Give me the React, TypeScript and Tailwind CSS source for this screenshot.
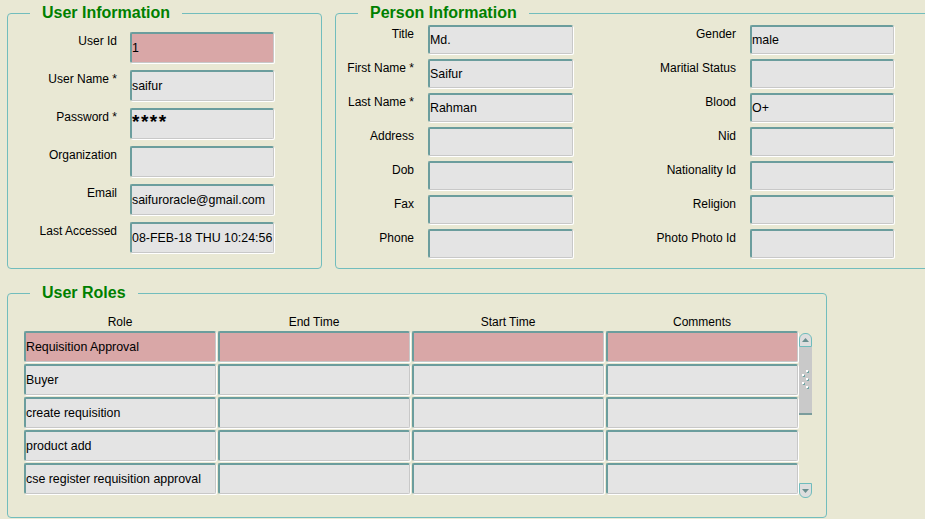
import React from "react";

const FONT = { fontFamily: '"Liberation Sans", Arial, sans-serif' };

const field =
  "flex items-center text-[12.4px] text-black border-t-2 border-l-2 border-t-[#6b9d9d] border-l-[#6b9d9d] border-r border-b border-r-[#c8c8c8] border-b-[#c8c8c8] shadow-[1px_1px_0_#ffffff] rounded-[2px] whitespace-nowrap overflow-hidden";

const Box = ({ value, red, h }: { value?: React.ReactNode; red?: boolean; h: string }) => (
  <div className={`${field} ${h} ${red ? "bg-[#d9a7a7]" : "bg-[#e4e4e4]"}`}>{value}</div>
);

const Label = ({ text }: { text: string }) => (
  <div className="text-right text-[12px] leading-[14px] pt-[2px] text-black whitespace-nowrap">{text}</div>
);

const Legend = ({ title }: { title: string }) => (
  <legend className="ml-[22px] px-[12px] text-[16px] leading-[20px] font-bold text-[#008000]">{title}</legend>
);

const USER_INFO: { label: string; value?: React.ReactNode; red?: boolean }[] = [
  { label: "User Id", value: "1", red: true },
  { label: "User Name *", value: "saifur" },
  {
    label: "Password *",
    value: <span className="text-[19px] font-bold tracking-[1.5px] leading-none -mt-[5px]">****</span>,
  },
  { label: "Organization" },
  { label: "Email", value: "saifuroracle@gmail.com" },
  { label: "Last Accessed", value: "08-FEB-18 THU 10:24:56" },
];

const PERSON: [string, string, string, string][] = [
  ["Title", "Md.", "Gender", "male"],
  ["First Name *", "Saifur", "Maritial Status", ""],
  ["Last Name *", "Rahman", "Blood", "O+"],
  ["Address", "", "Nid", ""],
  ["Dob", "", "Nationality Id", ""],
  ["Fax", "", "Religion", ""],
  ["Phone", "", "Photo Photo Id", ""],
];

const ROLES = [
  "Requisition Approval",
  "Buyer",
  "create requisition",
  "product add",
  "cse register requisition approval",
];

const ScrollBar = () => (
  <div className="ml-[1px] mt-[2px] w-[13px] h-[165px] flex flex-col">
    <div className="h-[14px] rounded-t-[6px] border border-[#6fbcbc] bg-[#dedede] flex items-center justify-center">
      <svg width="7" height="4" viewBox="0 0 7 4">
        <path d="M0 4 L3.5 0 L7 4 Z" fill="#6a8f8f" />
      </svg>
    </div>
    <div className="h-[68px] bg-[#c9c9c9] border-b-2 border-[#7a9c9c] flex items-center justify-center">
      <svg width="9" height="20" viewBox="0 0 9 20">
        {[
          [5, 0],
          [1, 4],
          [5, 8],
          [1, 12],
          [5, 16],
        ].map(([x, y], i) => (
          <g key={i}>
            <rect x={x + 1} y={y + 1} width="2" height="2" fill="#6fa5a5" />
            <rect x={x} y={y} width="2" height="2" fill="#ffffff" />
          </g>
        ))}
      </svg>
    </div>
    <div className="flex-1" />
    <div className="h-[15px] rounded-b-[6px] border border-[#6fbcbc] bg-[#dedede] flex items-center justify-center">
      <svg width="7" height="4" viewBox="0 0 7 4">
        <path d="M0 0 L3.5 4 L7 0 Z" fill="#6a8f8f" />
      </svg>
    </div>
  </div>
);

export default function App() {
  return (
    <div className="w-[925px] h-[519px] overflow-hidden bg-[#e9e8d4] pt-[3px]" style={FONT}>
      <div className="flex gap-[13px] pl-[7px]">
        {/* User Information */}
        <fieldset className="shrink-0 w-[315px] h-[266px] border border-[#72bdbd] rounded-[4px]">
          <Legend title="User Information" />
          <div className="pt-[9px] grid grid-cols-[109px_144px] gap-x-[13px] gap-y-[7px]">
            {USER_INFO.map((f) => (
              <React.Fragment key={f.label}>
                <Label text={f.label} />
                <Box h="h-[31px]" value={f.value} red={f.red} />
              </React.Fragment>
            ))}
          </div>
        </fieldset>

        {/* Person Information */}
        <fieldset className="shrink-0 w-[620px] h-[266px] border border-[#72bdbd] rounded-[4px]">
          <Legend title="Person Information" />
          <div className="pt-[2px] grid grid-cols-[78px_145px_149px_144px] gap-x-[14px] gap-y-[5px]">
            {PERSON.map(([l1, v1, l2, v2]) => (
              <React.Fragment key={l1}>
                <Label text={l1} />
                <Box h="h-[29px]" value={v1} />
                <Label text={l2} />
                <Box h="h-[29px]" value={v2} />
              </React.Fragment>
            ))}
          </div>
        </fieldset>
      </div>

      {/* User Roles */}
      <fieldset className="ml-[7px] mt-[14px] w-[820px] h-[235px] border border-[#72bdbd] rounded-[4px]">
        <Legend title="User Roles" />
        <div className="pt-[11px] pl-[16px]">
          <div className="grid grid-cols-[192px_192px_192px_192px] gap-x-[2px] h-[17px] text-[12px] leading-[17px] text-black text-center">
            <div>Role</div>
            <div>End Time</div>
            <div>Start Time</div>
            <div>Comments</div>
          </div>
          <div className="flex">
            <div className="grid grid-cols-[192px_192px_192px_192px] auto-rows-[31px] gap-x-[2px] gap-y-[2px]">
              {ROLES.map((r, i) => (
                <React.Fragment key={r}>
                  <Box h="h-[31px]" value={r} red={i === 0} />
                  <Box h="h-[31px]" red={i === 0} />
                  <Box h="h-[31px]" red={i === 0} />
                  <Box h="h-[31px]" red={i === 0} />
                </React.Fragment>
              ))}
            </div>
            <ScrollBar />
          </div>
        </div>
      </fieldset>
    </div>
  );
}
